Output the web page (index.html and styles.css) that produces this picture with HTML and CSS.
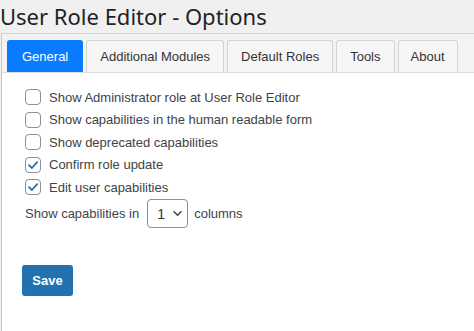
FILE: index.html
```html
<!DOCTYPE html>
<html lang="en">
<head>
  <meta charset="UTF-8" />
  <title>User Role Editor - Options</title>
  <link rel="stylesheet" href="styles.css">
</head>
<body>
  <h1 class="page-title">User Role Editor - Options</h1>

  <div class="tabs">
    <ul class="tab-nav">
      <li class="tab active">General</li>
      <li class="tab">Additional Modules</li>
      <li class="tab">Default Roles</li>
      <li class="tab">Tools</li>
      <li class="tab">About</li>
    </ul>

    <div class="tab-panel">
      <label class="option"><span class="check"></span>Show Administrator role at User Role Editor</label>
      <label class="option"><span class="check"></span>Show capabilities in the human readable form</label>
      <label class="option"><span class="check"></span>Show deprecated capabilities</label>
      <label class="option"><span class="check checked"><svg viewBox="0 0 14 14" width="14" height="14"><path d="M3 7.2 L5.9 10 L11.2 4.2" fill="none" stroke="#2271b1" stroke-width="1.8" stroke-linecap="round" stroke-linejoin="round"/></svg></span>Confirm role update</label>
      <label class="option"><span class="check checked"><svg viewBox="0 0 14 14" width="14" height="14"><path d="M3 7.2 L5.9 10 L11.2 4.2" fill="none" stroke="#2271b1" stroke-width="1.8" stroke-linecap="round" stroke-linejoin="round"/></svg></span>Edit user capabilities</label>

      <div class="columns-row">
        Show capabilities in
        <span class="select">1 <svg viewBox="0 0 12 8" width="11" height="7"><path d="M1.5 1.5 L6 6 L10.5 1.5" fill="none" stroke="#3c434a" stroke-width="1.6"/></svg></span>
        columns
      </div>

      <button class="save-btn">Save</button>
    </div>
  </div>
</body>
</html>
```

FILE: styles.css
```css
body {
  margin: 0;
  background: #f0f0f1;
  font-family: "Liberation Sans", Arial, sans-serif;
  color: #3c434a;
  font-size: 13px;
  overflow: hidden;
}

.page-title {
  margin: 0;
  padding: 2px 0 0 0;
  height: 31px;
  font-family: "Noto Sans", sans-serif;
  font-weight: 400;
  font-size: 22px;
  line-height: 28px;
  color: #1d2327;
}

.tabs {
  margin-left: 1px;
  border-top: 1px solid #d4d4d4;
  border-left: 1px solid #c8c8c8;
  background: #fff;
  height: 300px;
}

.tab-nav {
  list-style: none;
  margin: 0;
  padding: 6px 0 0 5px;
  display: flex;
  gap: 3px;
  background: #f3f3f3;
  border-bottom: 1px solid #dcdcdc;
  height: 32px;
}

.tab {
  flex-shrink: 0;
  white-space: nowrap;
  height: 31px;
  padding: 0 13px;
  display: flex;
  align-items: center;
  justify-content: center;
  font-size: 13px;
  color: #333;
  background: #f6f6f6;
  border: 1px solid #d3d3d3;
  border-bottom: none;
  border-radius: 3px 3px 0 0;
}

.tab.active {
  background: #0a7bff;
  border-color: #0a7bff;
  color: #fff;
  padding: 0 14px;
}

.tab:last-child {
  padding: 0 12px;
}

.tab-panel {
  padding: 13px 0 0 23px;
}

.option {
  display: flex;
  align-items: center;
  gap: 8px;
  height: 22.5px;
  font-size: 13px;
}

.check {
  width: 14px;
  height: 14px;
  border: 1px solid #8c8f94;
  border-radius: 4px;
  background: #fff;
  display: flex;
  align-items: center;
  justify-content: center;
}

.columns-row {
  display: flex;
  align-items: center;
  height: 30px;
}

.select {
  margin: 0 6px 0 8px;
  width: 41px;
  height: 29px;
  box-sizing: border-box;
  border: 1px solid #8c8f94;
  border-radius: 4px;
  display: flex;
  align-items: center;
  gap: 7px;
  padding-left: 9px;
  font-size: 14px;
  color: #2c3338;
}

.save-btn {
  display: block;
  margin-top: 36px;
  margin-left: -3px;
  width: 51px;
  height: 31px;
  border: none;
  border-radius: 3px;
  background: #2271b1;
  color: #fff;
  font-family: "Liberation Sans", Arial, sans-serif;
  font-size: 13px;
  font-weight: 700;
  padding: 0;
}
```
